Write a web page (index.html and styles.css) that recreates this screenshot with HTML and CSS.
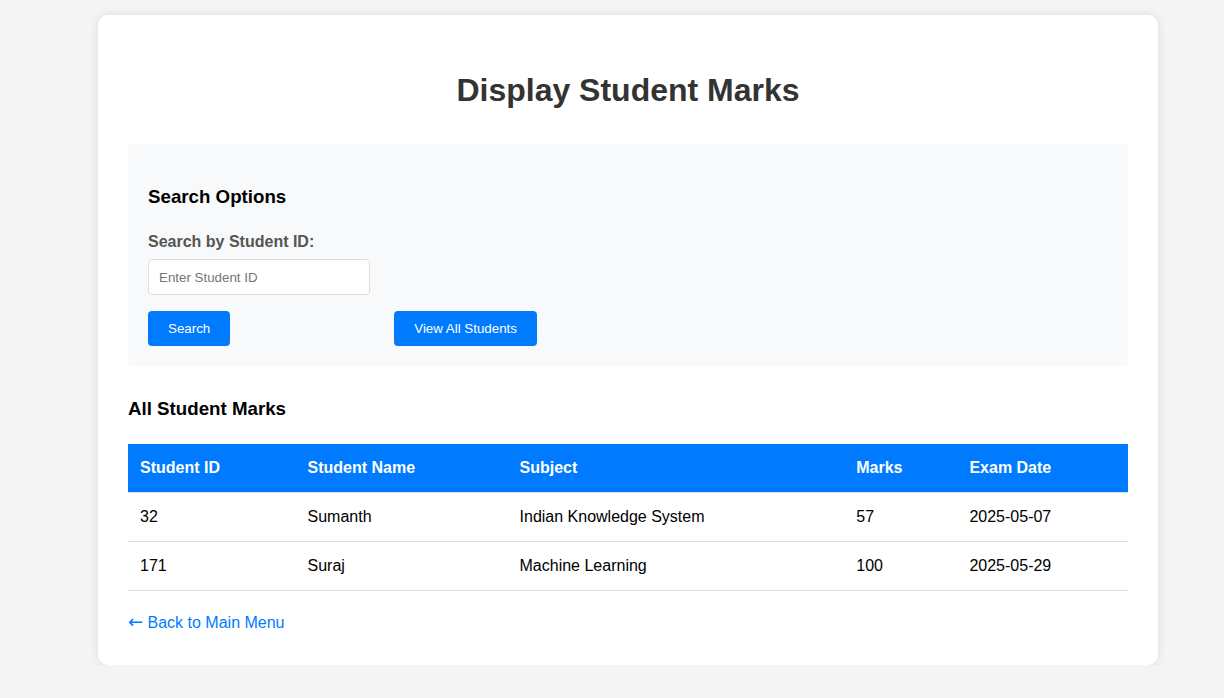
FILE: index.html
```html
<!DOCTYPE html>
<html lang="en">
<head>
<meta charset="UTF-8">
<title>Display Student Marks</title>
<link rel="stylesheet" href="styles.css">
</head>
<body>
<div class="container">
  <h1 class="title">Display Student Marks</h1>
  <div class="search-box">
    <h3 class="section-title search-title">Search Options</h3>
    <label class="field-label" for="sid">Search by Student ID:</label>
    <input class="text-input" id="sid" type="text" placeholder="Enter Student ID">
    <div class="btn-row">
      <button class="btn">Search</button>
      <button class="btn btn-all">View All Students</button>
    </div>
  </div>
  <h3 class="section-title table-title">All Student Marks</h3>
  <table class="marks">
    <thead>
      <tr><th>Student ID</th><th>Student Name</th><th>Subject</th><th>Marks</th><th>Exam Date</th></tr>
    </thead>
    <tbody>
      <tr><td>32</td><td>Sumanth</td><td>Indian Knowledge System</td><td>57</td><td>2025-05-07</td></tr>
      <tr><td>171</td><td>Suraj</td><td>Machine Learning</td><td>100</td><td>2025-05-29</td></tr>
    </tbody>
  </table>
  <div class="back">
    <a class="back-link" href="#"><span class="arrow">&larr;</span> Back to Main Menu</a>
  </div>
</div>
</body>
</html>
```

FILE: styles.css
```css
html, body {
  margin: 0;
  padding: 0;
}
body {
  background: #f4f4f4;
  font-family: "Liberation Sans", Arial, sans-serif;
  color: #000;
}
.container {
  width: 1000px;
  margin: 15px 0 0 98px;
  padding: 30px 30px 33px;
  background: #fff;
  border-radius: 10px;
  box-shadow: 0 0 10px rgba(0, 0, 0, 0.1);
}
.title {
  margin: 27px 0 35px;
  font-size: 32px;
  font-weight: bold;
  color: #333;
  text-align: center;
}
.search-box {
  background: #f8f9fa;
  border-radius: 5px;
  padding: 20px;
}
.section-title {
  font-size: 18.72px;
  font-weight: bold;
  color: #000;
}
.search-title {
  margin: 22px 0 25px;
}
.field-label {
  display: block;
  margin-bottom: 8px;
  font-size: 16px;
  font-weight: bold;
  color: #555;
}
.text-input {
  display: block;
  width: 200px;
  height: 14px;
  padding: 10px;
  border: 1px solid #ddd;
  border-radius: 4px;
  font-family: "Liberation Sans", Arial, sans-serif;
  font-size: 13.33px;
  background: #fff;
  outline: none;
}
.text-input::placeholder {
  color: #757575;
}
.btn-row {
  display: flex;
  margin-top: 16px;
}
.btn {
  height: 35px;
  padding: 0 20px;
  border: none;
  border-radius: 4px;
  background: #007bff;
  color: #fff;
  font-family: "Liberation Sans", Arial, sans-serif;
  font-size: 13.33px;
  cursor: pointer;
}
.btn-all {
  margin-left: 164px;
}
.table-title {
  margin: 32px 0 24px;
}
.marks {
  width: 100%;
  border-collapse: separate;
  border-spacing: 0;
}
.marks th,
.marks td {
  padding: 12px;
  line-height: 24px;
  font-size: 16px;
  text-align: left;
  border-bottom: 1px solid #ddd;
}
.marks th {
  background: #007bff;
  color: #fff;
  font-weight: bold;
}
.marks td {
  color: #000;
}
.back {
  margin-top: 22px;
  font-size: 16px;
}
.back-link {
  color: #007bff;
  text-decoration: none;
}
.arrow {
  font-family: "DejaVu Sans", sans-serif;
  font-size: 18px;
  line-height: 1;
}
```
